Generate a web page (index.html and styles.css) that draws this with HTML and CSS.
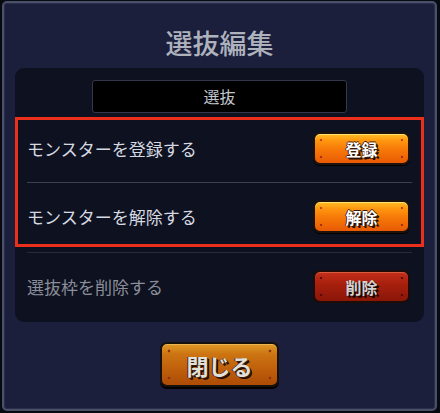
FILE: index.html
```html
<!DOCTYPE html>
<html lang="ja">
<head>
  <meta charset="UTF-8" />
  <meta name="viewport" content="width=device-width, initial-scale=1.0"/>
  <title>選抜編集</title>
  <link rel="stylesheet" href="styles.css">
</head>
<body>

  <div class="dialog">
    <h1 class="dialog-title">選抜編集</h1>

    <div class="panel">
      <div class="label-box">選抜</div>

      <div class="choices">
        <div class="row">
          <span class="row-text">モンスターを登録する</span>
          <button class="btn btn-orange">登録</button>
        </div>
        <div class="sep"></div>
        <div class="row">
          <span class="row-text">モンスターを解除する</span>
          <button class="btn btn-orange">解除</button>
        </div>
      </div>

      <div class="sep sep-outer"></div>

      <div class="row row-muted">
        <span class="row-text">選抜枠を削除する</span>
        <button class="btn btn-red">削除</button>
      </div>
    </div>

    <button class="btn btn-close">閉じる</button>
  </div>

</body>
</html>
```

FILE: styles.css
```css
body {
  margin: 0;
  padding: 1px 3px 2px 2px;
  background: #080a12;
  font-family: "Noto Sans CJK JP", "Noto Sans", sans-serif;
}

.dialog {
  box-sizing: border-box;
  width: 435px;
  height: 410px;
  border: 2px solid #4a5068;
  border-radius: 5px;
  box-shadow: inset 0 0 0 1px #2a2f4c;
  background: #1b1f3c;
  padding: 0 11px;
  display: flex;
  flex-direction: column;
  align-items: center;
}

.dialog-title {
  margin: 20px 0 5px;
  height: 40px;
  line-height: 40px;
  font-size: 27px;
  font-weight: 500;
  color: #aeb2bd;
}

.panel {
  box-sizing: border-box;
  width: 100%;
  height: 254px;
  background: #0e1120;
  border-radius: 9px;
  padding-top: 12px;
  display: flex;
  flex-direction: column;
  align-items: center;
}

.label-box {
  box-sizing: border-box;
  width: 255px;
  height: 33px;
  line-height: 31px;
  text-align: center;
  background: #000;
  border: 1px solid #34374a;
  border-radius: 3px;
  color: #c3c6ce;
  font-size: 16px;
}

.choices {
  box-sizing: border-box;
  width: 100%;
  margin-top: 4px;
  border: 3px solid #ec2f1a;
  padding: 9px 0 8px;
}

.row {
  height: 39px;
  display: flex;
  align-items: center;
  justify-content: space-between;
  padding: 0 11px 0 9px;
}

.row-text {
  font-size: 17px;
  color: #d6d9e0;
}

.sep {
  height: 1px;
  background: #3b3f52;
  margin: 14px 9px;
}

.sep-outer {
  width: calc(100% - 24px);
  margin: 5px 12px 14px;
  background: #262a3c;
}

.row-muted {
  width: 100%;
  box-sizing: border-box;
  padding: 0 14px 0 12px;
}

.row-muted .row-text {
  color: #8a8e99;
}

.btn {
  box-sizing: border-box;
  width: 97px;
  height: 33px;
  border: 2px solid #1e130c;
  border-radius: 7px;
  font-family: inherit;
  font-size: 16px;
  font-weight: 700;
  color: #fff;
  text-shadow: 1px 1px 0 #3a1a08, -1px 0 0 #3a1a08, 0 -1px 0 #3a1a08, 2px 2px 0 #1a0a04;
  cursor: pointer;
  padding: 0;
}

.btn-orange {
  background:
    radial-gradient(circle at 6px 6px, #c8420e 1px, transparent 1.6px),
    radial-gradient(circle at calc(100% - 6px) 6px, #c8420e 1px, transparent 1.6px),
    radial-gradient(circle at 6px calc(100% - 6px), #a8300a 1px, transparent 1.6px),
    radial-gradient(circle at calc(100% - 6px) calc(100% - 6px), #a8300a 1px, transparent 1.6px),
    linear-gradient(#ffbe28 0%, #ff9810 22%, #f67808 55%, #e85a04 100%);
  box-shadow: inset 0 1px 0 #ffe070, 0 1px 0 #000;
}

.btn-red {
  color: #d2d2d2;
  text-shadow: 1px 1px 0 #2a0804, 2px 2px 0 #160402;
  border-color: #1c0c0a;
  background:
    radial-gradient(circle at 6px 6px, #5a0a04 1px, transparent 1.6px),
    radial-gradient(circle at calc(100% - 6px) 6px, #5a0a04 1px, transparent 1.6px),
    radial-gradient(circle at 6px calc(100% - 6px), #5a0a04 1px, transparent 1.6px),
    radial-gradient(circle at calc(100% - 6px) calc(100% - 6px), #5a0a04 1px, transparent 1.6px),
    linear-gradient(#c4301a 0%, #a8200e 40%, #8a1608 100%);
  box-shadow: inset 0 1px 0 #d85a40;
}

.btn-close {
  width: 119px;
  height: 45px;
  margin-top: 20px;
  font-size: 22px;
  color: #e2e0da;
  border: 2px solid #17110c;
  border-radius: 7px;
  background:
    radial-gradient(circle at 7px 7px, #8a3208 1px, transparent 1.7px),
    radial-gradient(circle at calc(100% - 7px) 7px, #8a3208 1px, transparent 1.7px),
    radial-gradient(circle at 7px calc(100% - 7px), #8a3208 1px, transparent 1.7px),
    radial-gradient(circle at calc(100% - 7px) calc(100% - 7px), #8a3208 1px, transparent 1.7px),
    linear-gradient(#e09a28 0%, #cc7412 25%, #c0600c 60%, #ac4c06 100%);
  box-shadow: inset 0 1px 0 #eab450, 0 2px 0 #000;
  text-shadow: 1px 1px 0 #3a1a08, -1px 0 0 #3a1a08, 2px 2px 0 #1a0a04;
}
```
